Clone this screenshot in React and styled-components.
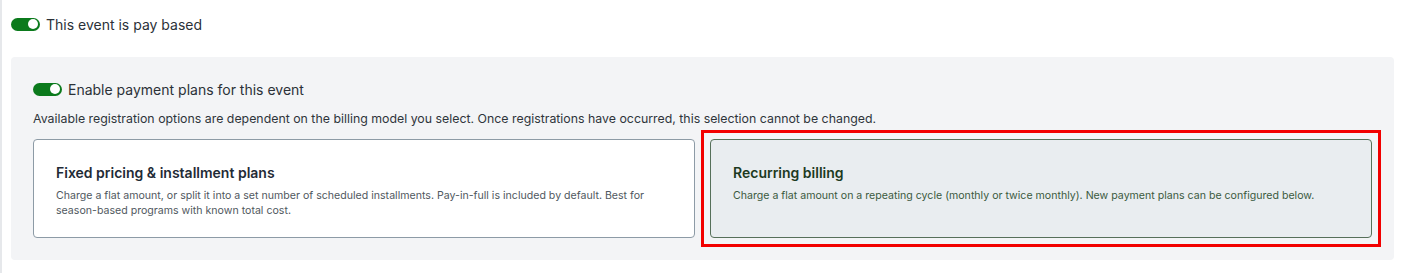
import React from "react";
import styled, { createGlobalStyle, css } from "styled-components";

const Global = createGlobalStyle`
  html, body { margin: 0; padding: 0; background: #ffffff; }
  body { font-family: Inter, "Noto Sans", sans-serif; }
`;

const Page = styled.div`
  border-left: 2px solid #e6e8eb;
  padding: 16px 12px 13px 9px;
  min-height: 244px;
`;

const ToggleRow = styled.label`
  display: flex;
  align-items: center;
  gap: 6px;
  font-size: 14px;
  color: #2b3138;
  height: 16px;
`;

const Switch = styled.span`
  position: relative;
  width: 29px;
  height: 13px;
  border-radius: 7px;
  background: #0b7a1c;
  flex: none;
  &::after {
    content: "";
    position: absolute;
    right: 2px;
    top: 1.5px;
    width: 10px;
    height: 10px;
    border-radius: 50%;
    background: #ffffff;
  }
`;

const Panel = styled.section`
  margin-top: 25px;
  background: #f3f4f6;
  border-radius: 4px;
  padding: 24px 22px 22px 22px;
`;

const Hint = styled.p`
  margin: 14px 0 12px;
  font-size: 12.35px;
  color: #2f353b;
  line-height: 16px;
`;

const Cards = styled.div`
  display: grid;
  grid-template-columns: 1fr 1fr;
  gap: 15px;
`;

const Card = styled.div`
  position: relative;
  height: 99px;
  box-sizing: border-box;
  border-radius: 4px;
  padding: 24px 22px 0 22px;
  border: 1px solid ${(p) => (p.$selected ? "#56705a" : "#8d9ba6")};
  background: ${(p) => (p.$selected ? "#e9edf0" : "#ffffff")};
  ${(p) =>
    p.$selected &&
    css`
      &::after {
        content: "";
        position: absolute;
        inset: -10px;
        border: 3px solid #f20000;
        pointer-events: none;
      }
    `}
`;

const Title = styled.h3`
  margin: 0 0 6px;
  font-size: 14px;
  font-weight: 600;
  line-height: 18px;
  color: ${(p) => (p.$selected ? "#1d3a1f" : "#1f2b36")};
`;

const Desc = styled.p`
  margin: 0;
  font-size: 10.6px;
  line-height: 15px;
  color: ${(p) => (p.$selected ? "#3b5a3e" : "#505860")};
`;

const options = [
  {
    title: "Fixed pricing & installment plans",
    desc: "Charge a flat amount, or split it into a set number of scheduled installments. Pay-in-full is included by default. Best for season-based programs with known total cost.",
  },
  {
    title: "Recurring billing",
    desc: "Charge a flat amount on a repeating cycle (monthly or twice monthly). New payment plans can be configured below.",
    selected: true,
  },
];

export default function App() {
  return (
    <>
      <Global />
      <Page>
        <ToggleRow>
          <Switch />
          This event is pay based
        </ToggleRow>
        <Panel>
          <ToggleRow>
            <Switch />
            Enable payment plans for this event
          </ToggleRow>
          <Hint>
            Available registration options are dependent on the billing model you select. Once registrations have occurred, this selection cannot be changed.
          </Hint>
          <Cards>
            {options.map((o) => (
              <Card key={o.title} $selected={o.selected}>
                <Title $selected={o.selected}>{o.title}</Title>
                <Desc $selected={o.selected}>{o.desc}</Desc>
              </Card>
            ))}
          </Cards>
        </Panel>
      </Page>
    </>
  );
}
